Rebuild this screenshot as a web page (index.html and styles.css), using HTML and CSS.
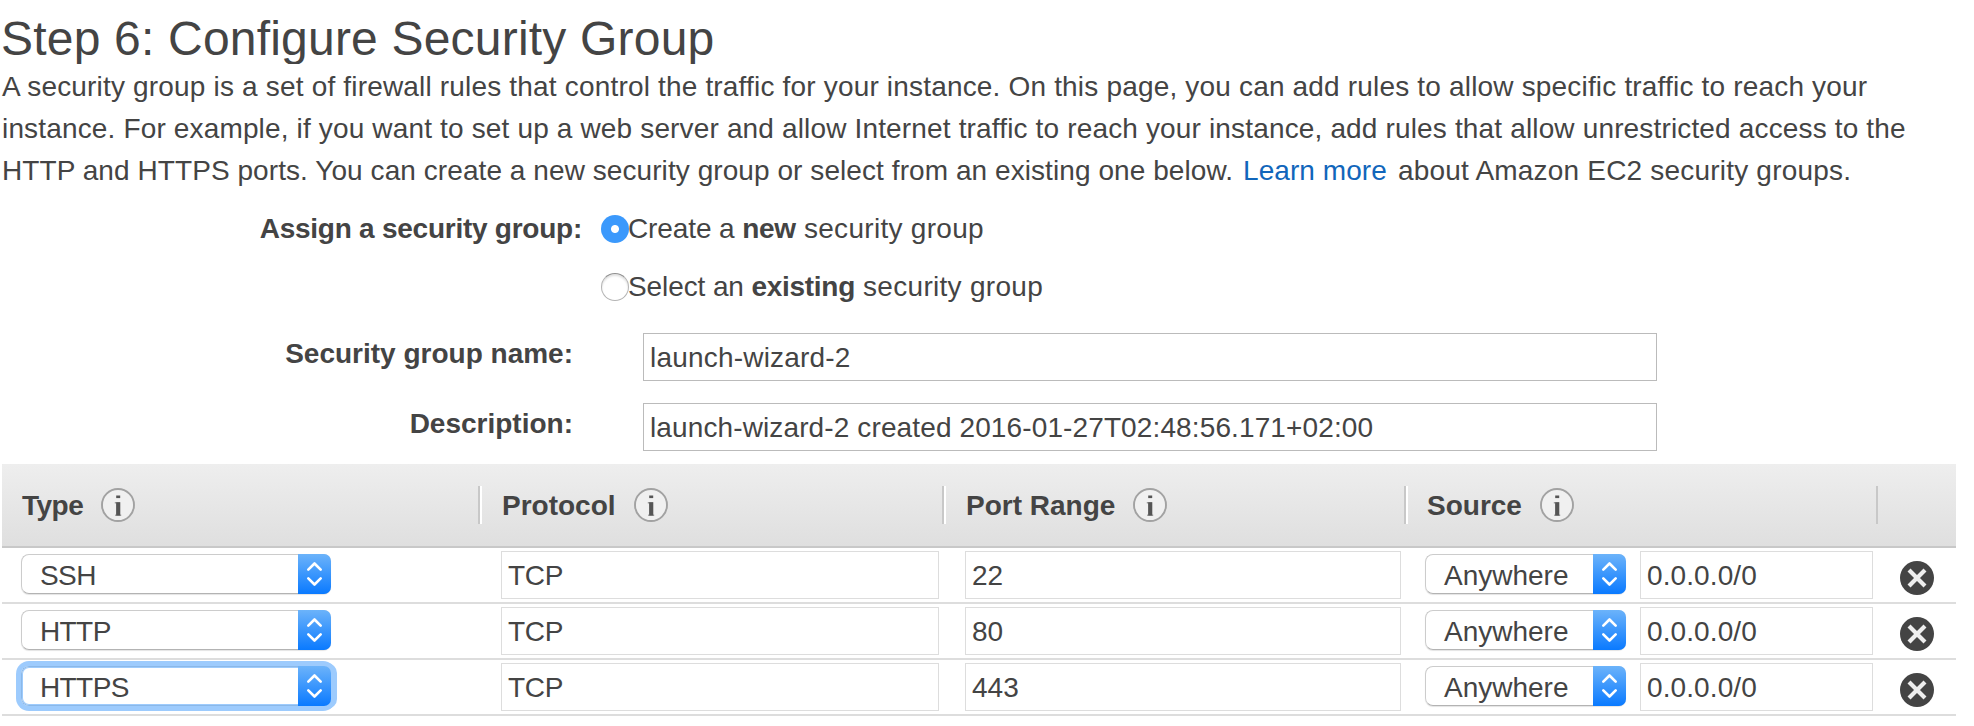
FILE: index.html
```html
<!DOCTYPE html>
<html lang="en">
<head>
<meta charset="utf-8">
<title>Step 6: Configure Security Group</title>
<link rel="stylesheet" href="styles.css">
</head>
<body>
<svg class="sprite" aria-hidden="true">
  <symbol id="info" viewBox="0 0 34 34"><circle cx="17" cy="17" r="16" fill="#f0f0f0" stroke="#a2a2a2" stroke-width="1.900"/><path d="M15.200 7.500h4v2.600h-4z" fill="#555"/><path d="M13.800 14h5.400v12.500h1v1.500h-6v-1.500h1v-11h-1.400z" fill="#999"/><path d="M15.200 14.300h4v13.200h-4z" fill="#555"/></symbol>
  <symbol id="remove" viewBox="0 0 34 34"><circle cx="17" cy="17" r="17" fill="#444"/><path d="M10.500 10.500l13 13M23.500 10.500l-13 13" stroke="#eee" stroke-width="4.200" stroke-linecap="square" fill="none"/></symbol>
  <symbol id="updown" viewBox="0 0 33 40"><path d="M10.300 15.700l6.200-6.200 6.200 6.200M10.300 24.300l6.200 6.200 6.200-6.200" stroke="#fff" stroke-width="2.600" stroke-linecap="round" stroke-linejoin="round" fill="none"/></symbol>
</svg>
<h1 class="title"><span>Step 6: Configure Security Group</span></h1>
<p class="intro">
  <span class="line l1">A security group is a set of firewall rules that control the traffic for your instance. On this page, you can add rules to allow specific traffic to reach your</span>
  <span class="line l2">instance. For example, if you want to set up a web server and allow Internet traffic to reach your instance, add rules that allow unrestricted access to the</span>
  <span class="line l3"><span>HTTP and HTTPS ports. You can create a new security group or select from an existing one below.</span><a class="learn">Learn more</a><span class="tail">about Amazon EC2 security groups.</span></span>
</p>
<form class="form">
  <div class="assign">
    <b class="assign-label">Assign a security group:</b>
    <div class="options">
      <label class="option"><i class="radio checked"></i><span>Create a <b>new</b><span class="rest"> security group</span></span></label>
      <label class="option"><i class="radio"></i><span>Select an <b>existing</b><span class="rest"> security group</span></span></label>
    </div>
  </div>
  <div class="field"><b class="field-label">Security group name:</b><div class="box name">launch-wizard-2</div></div>
  <div class="field"><b class="field-label">Description:</b><div class="box">launch-wizard-2 created 2016-01-27T02:48:56.171+02:00</div></div>
</form>
<section class="rules">
  <div class="row head">
    <div class="th"><b class="tight">Type</b><svg class="info"><use href="#info"/></svg></div>
    <div class="th"><b>Protocol</b><svg class="info"><use href="#info"/></svg></div>
    <div class="th"><b>Port Range</b><svg class="info"><use href="#info"/></svg></div>
    <div class="th last"><b>Source</b><svg class="info"><use href="#info"/></svg></div>
  </div>
  <div class="row">
    <div class="cell"><div class="select type"><span>SSH</span><svg class="arrows"><use href="#updown"/></svg></div></div>
    <div class="cell"><div class="input protocol">TCP</div></div>
    <div class="cell"><div class="input port">22</div></div>
    <div class="cell source"><div class="select from"><span>Anywhere</span><svg class="arrows"><use href="#updown"/></svg></div><div class="input cidr">0.0.0.0/0</div></div>
    <svg class="remove"><use href="#remove"/></svg>
  </div>
  <div class="row">
    <div class="cell"><div class="select type"><span>HTTP</span><svg class="arrows"><use href="#updown"/></svg></div></div>
    <div class="cell"><div class="input protocol">TCP</div></div>
    <div class="cell"><div class="input port">80</div></div>
    <div class="cell source"><div class="select from"><span>Anywhere</span><svg class="arrows"><use href="#updown"/></svg></div><div class="input cidr">0.0.0.0/0</div></div>
    <svg class="remove"><use href="#remove"/></svg>
  </div>
  <div class="row">
    <div class="cell"><div class="select type focused"><span>HTTPS</span><svg class="arrows"><use href="#updown"/></svg></div></div>
    <div class="cell"><div class="input protocol">TCP</div></div>
    <div class="cell"><div class="input port">443</div></div>
    <div class="cell source"><div class="select from"><span>Anywhere</span><svg class="arrows"><use href="#updown"/></svg></div><div class="input cidr">0.0.0.0/0</div></div>
    <svg class="remove"><use href="#remove"/></svg>
  </div>
</section>
</body>
</html>
```
FILE: styles.css
```css
* { box-sizing: border-box; }
body {
  margin: 0;
  background: #fff;
  color: #444;
  font: 28px/42px "Liberation Sans", Arial, sans-serif;
}
.sprite { position: absolute; width: 0; height: 0; }
svg { display: block; flex: none; }

.title {
  height: 64px;
  margin: 0;
  padding: 11px 0 0 1px;
  overflow: hidden;
  font-size: 48px;
  font-weight: 400;
  line-height: 56px;
  letter-spacing: 0.2px;
  white-space: nowrap;
}
.intro { margin: 0; padding: 2px 0 0 2px; white-space: nowrap; }
.line { display: flex; width: max-content; }
.l1 { letter-spacing: 0.178px; }
.l2 { letter-spacing: 0.155px; }
.l3 { letter-spacing: 0.07px; }
.learn { margin-left: 10px; color: #1166bb; }
.tail { margin-left: 11px; letter-spacing: 0.2px; }

.form { display: flex; flex-direction: column; }
.assign { display: flex; padding-top: 16px; height: 141px; }
.assign-label { width: 582px; text-align: right; letter-spacing: -0.25px; }
.options { display: flex; flex-direction: column; gap: 16px; margin-left: 19px; }
.option { display: flex; align-items: center; height: 42px; letter-spacing: -0.1px; }
.option > span { margin-left: -1px; }
.option b { letter-spacing: -0.3px; }
.option .rest { letter-spacing: 0.3px; }
.radio {
  width: 28px;
  height: 28px;
  border: 1px solid #b4b4b4;
  border-top-color: #8f8f8f;
  border-radius: 50%;
  background: #fff;
  box-shadow: inset 0 2px 2px #e2e2e2;
}
.radio.checked { border: 0; background: radial-gradient(circle, #fff 3.500px, #3b99fc 4.500px); box-shadow: none; }
.field { display: flex; height: 70px; }
.field-label { width: 573px; text-align: right; }
.box {
  width: 1014px;
  height: 48px;
  margin-left: 70px;
  padding: 3px 0 0 6px;
  border: 1px solid #bbb;
  letter-spacing: 0.12px;
  white-space: nowrap;
}
.name { letter-spacing: 0.2px; }

.rules { width: 1954px; margin: -9px 0 0 2px; }
.row {
  display: grid;
  grid-template-columns: 480px 464px 462px 472px 76px;
  height: 56px;
  border-bottom: 2px solid #ddd;
}
.head { height: 84px; border-color: #c8c8c8; background: linear-gradient(#eee, #dfdfdf); }
.th {
  display: flex;
  align-items: center;
  height: 38px;
  margin-top: 22px;
  padding-left: 20px;
  border-right: 2px solid #fff;
  box-shadow: inset -2px 0 #c8c8c8;
}
.th b { padding-top: 1px; }
.th.last { padding-left: 19px; border-right-color: transparent; }
.tight { letter-spacing: -0.5px; }
.info { width: 34px; height: 34px; margin-left: 18px; }
.cell { display: flex; padding: 3px 0 0 19px; }
.input {
  height: 48px;
  padding: 3px 0 0 6px;
  border: 1px solid #ddd;
}
.protocol { width: 438px; letter-spacing: -0.3px; }
.port { width: 436px; }
.cidr { width: 233px; letter-spacing: 0.1px; }
.select {
  display: flex;
  justify-content: space-between;
  height: 40px;
  margin-top: 3px;
  padding-left: 18px;
  border: 1px solid #ccc;
  border-bottom-color: #b3b3b3;
  border-right: 0;
  border-radius: 8px;
  line-height: 42px;
  box-shadow: 0 1px 1px #e4e4e4;
}
.type { width: 310px; letter-spacing: -0.6px; }
.from { width: 201px; margin-right: 14px; }
.source { padding-left: 17px; }
.arrows {
  width: 33px;
  height: 40px;
  margin-top: -1px;
  border-radius: 0 7px 7px 0;
  background: linear-gradient(#6cb3fa, #0a7aff);
}
.focused { border-color: #8bb8e8; box-shadow: 0 0 0 5px #9dcbfd, inset 0 0 0 1px #9dcbfd; }
.focused .arrows { box-shadow: 3px 0 0 3px #9dcbfd; clip-path: inset(-6px -6px -6px 0); }
.remove { width: 34px; height: 34px; margin: 13px 0 0 20px; }
```
